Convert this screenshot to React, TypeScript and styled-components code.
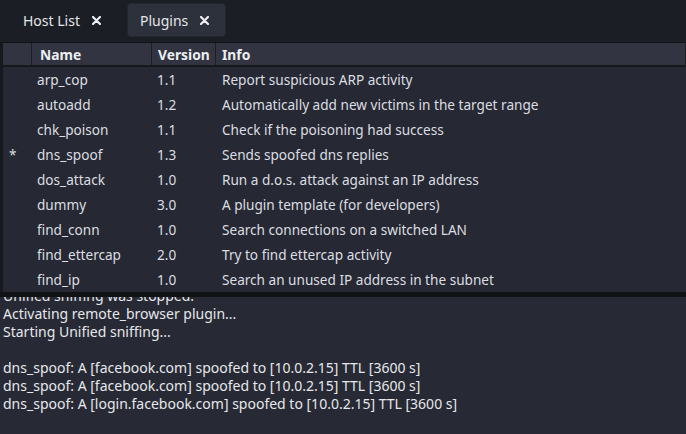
import React from "react";
import styled, { createGlobalStyle } from "styled-components";

const Global = createGlobalStyle`
  html, body { margin: 0; padding: 0; background: #1c1f26; }
  body { font-family: "Noto Sans", "DejaVu Sans", sans-serif; }
  * { box-sizing: border-box; }
`;

const Window = styled.div`
  width: 686px;
  height: 434px;
  display: flex;
  flex-direction: column;
  overflow: hidden;
  background: #1c1f26;
  color: #dedfe2;
  font-size: 14px;
`;

const TabBar = styled.div`
  height: 43px;
  display: flex;
  align-items: flex-start;
  gap: 9px;
  padding: 3px 0 0 10px;
  background: #1b1e25;
  border-bottom: 1px solid #121317;
`;

const Tab = styled.div<{ $active?: boolean }>`
  height: 34px;
  display: flex;
  align-items: center;
  gap: 12px;
  padding: 0 16px 0 12px;
  border-radius: 4px;
  background: ${(p) => (p.$active ? "#2d313b" : "transparent")};
  border: 1px solid ${(p) => (p.$active ? "#23262e" : "transparent")};
  color: #e4e5e8;
  font-size: 14px;
`;

const Close = styled.svg`
  width: 9px;
  height: 9px;
  flex: none;
`;

const TablePanel = styled.div`
  display: flex;
  flex-direction: column;
  border-left: 3px solid #17191e;
  background: #262933;
`;

const cols = "29px 120px 64px 1fr";

const HeaderRow = styled.div`
  display: grid;
  grid-template-columns: ${cols};
  height: 24px;
  background: #323541;
  border-bottom: 2px solid #16181c;
`;

const HeaderCell = styled.div<{ $pad?: number }>`
  display: flex;
  align-items: center;
  padding-left: ${(p) => p.$pad ?? 7}px;
  border-right: 1px solid #1d1f25;
  font-weight: 700;
  color: #eceef1;
  font-size: 13.8px;
`;

const Row = styled.div`
  display: grid;
  grid-template-columns: ${cols};
  height: 25px;
  align-items: center;
  font-size: 13.6px;
`;

const Cell = styled.div<{ $pad?: number }>`
  padding-left: ${(p) => p.$pad ?? 5}px;
  white-space: nowrap;
  color: #dcdde1;
`;

const Divider = styled.div`
  height: 5px;
  background: #111216;
`;

const LogPanel = styled.div`
  flex: 1;
  overflow: hidden;
  background: #272a35;
  padding-left: 3px;
`;

const LogText = styled.div`
  margin-top: -10px;
  line-height: 18px;
  font-size: 14px;
  color: #e6e7ea;
  white-space: pre;
`;

const plugins: [string, string, string, string][] = [
  ["", "arp_cop", "1.1", "Report suspicious ARP activity"],
  ["", "autoadd", "1.2", "Automatically add new victims in the target range"],
  ["", "chk_poison", "1.1", "Check if the poisoning had success"],
  ["*", "dns_spoof", "1.3", "Sends spoofed dns replies"],
  ["", "dos_attack", "1.0", "Run a d.o.s. attack against an IP address"],
  ["", "dummy", "3.0", "A plugin template (for developers)"],
  ["", "find_conn", "1.0", "Search connections on a switched LAN"],
  ["", "find_ettercap", "2.0", "Try to find ettercap activity"],
  ["", "find_ip", "1.0", "Search an unused IP address in the subnet"],
];

const log = [
  "Unified sniffing was stopped.",
  "Activating remote_browser plugin...",
  "Starting Unified sniffing...",
  "",
  "dns_spoof: A [facebook.com] spoofed to [10.0.2.15] TTL [3600 s]",
  "dns_spoof: A [facebook.com] spoofed to [10.0.2.15] TTL [3600 s]",
  "dns_spoof: A [login.facebook.com] spoofed to [10.0.2.15] TTL [3600 s]",
];

const CloseIcon = () => (
  <Close viewBox="0 0 9 9">
    <path d="M1 1 L8 8 M8 1 L1 8" stroke="#eceef1" strokeWidth="2.2" strokeLinecap="round" />
  </Close>
);

export default function App() {
  return (
    <>
      <Global />
      <Window>
        <TabBar>
          <Tab>
            Host List
            <CloseIcon />
          </Tab>
          <Tab $active>
            Plugins
            <CloseIcon />
          </Tab>
        </TabBar>
        <TablePanel>
          <HeaderRow>
            <HeaderCell />
            <HeaderCell $pad={8}>Name</HeaderCell>
            <HeaderCell $pad={6}>Version</HeaderCell>
            <HeaderCell $pad={6}>Info</HeaderCell>
          </HeaderRow>
          {plugins.map(([mark, name, ver, info]) => (
            <Row key={name}>
              <Cell $pad={6}>{mark}</Cell>
              <Cell $pad={5}>{name}</Cell>
              <Cell $pad={5}>{ver}</Cell>
              <Cell $pad={6}>{info}</Cell>
            </Row>
          ))}
        </TablePanel>
        <Divider />
        <LogPanel>
          <LogText>{log.join("\n")}</LogText>
        </LogPanel>
      </Window>
    </>
  );
}
